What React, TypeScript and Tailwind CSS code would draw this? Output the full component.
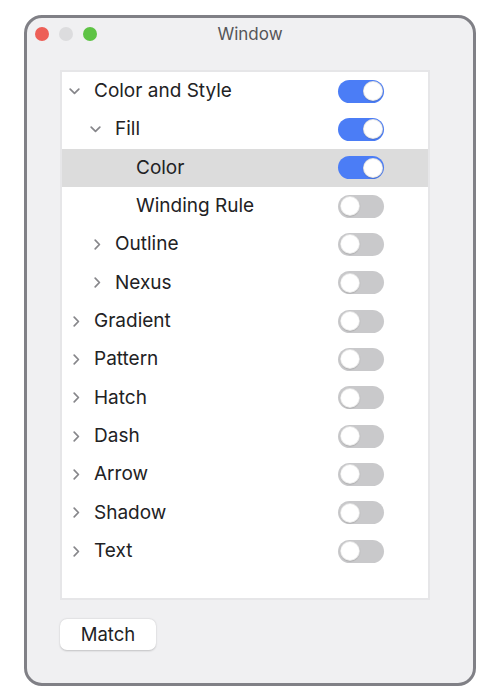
import { useState } from "react";

type Row = { label: string; level: number; chevron: "down" | "right" | null; on: boolean; selected?: boolean };

const ROWS: Row[] = [
  { label: "Color and Style", level: 0, chevron: "down", on: true },
  { label: "Fill", level: 1, chevron: "down", on: true },
  { label: "Color", level: 2, chevron: null, on: true, selected: true },
  { label: "Winding Rule", level: 2, chevron: null, on: false },
  { label: "Outline", level: 1, chevron: "right", on: false },
  { label: "Nexus", level: 1, chevron: "right", on: false },
  { label: "Gradient", level: 0, chevron: "right", on: false },
  { label: "Pattern", level: 0, chevron: "right", on: false },
  { label: "Hatch", level: 0, chevron: "right", on: false },
  { label: "Dash", level: 0, chevron: "right", on: false },
  { label: "Arrow", level: 0, chevron: "right", on: false },
  { label: "Shadow", level: 0, chevron: "right", on: false },
  { label: "Text", level: 0, chevron: "right", on: false },
];

const INDENT = ["pl-[7px]", "pl-[28px]", "pl-[49px]"];

function Chevron({ dir }: { dir: "down" | "right" }) {
  return dir === "down" ? (
    <svg width="11" height="7" viewBox="0 0 11 7" className="text-[#86868a]">
      <path d="M1.2 1.2 L5.5 5.4 L9.8 1.2" fill="none" stroke="currentColor" strokeWidth="1.7" strokeLinecap="round" strokeLinejoin="round" />
    </svg>
  ) : (
    <svg width="7" height="11" viewBox="0 0 7 11" className="ml-[4px] text-[#86868a]">
      <path d="M1.2 1.2 L5.4 5.5 L1.2 9.8" fill="none" stroke="currentColor" strokeWidth="1.7" strokeLinecap="round" strokeLinejoin="round" />
    </svg>
  );
}

function Toggle({ on }: { on: boolean }) {
  return (
    <div
      className={`flex h-[23px] w-[46px] items-center rounded-full px-[1.5px] ${
        on ? "justify-end bg-[#4b7df6]" : "justify-start bg-[#c9c9cb]"
      }`}
    >
      <div className="h-[20px] w-[20px] rounded-full border border-black/10 bg-white shadow-[0_0.5px_1px_rgba(0,0,0,0.2)]" />
    </div>
  );
}

export default function App() {
  const [rows] = useState(ROWS);
  return (
    <div className="h-[700px] w-[500px] bg-white pl-[24px] pt-[15px] font-['Inter','Liberation_Sans',sans-serif]">
      <div className="flex h-[671px] w-[452px] flex-col rounded-[18px] border-[3px] border-[#808086] bg-[#f0f0f2]">
        {/* Title bar */}
        <div className="relative flex h-[34px] items-center justify-center">
          <div className="absolute left-[8px] top-[9px] flex gap-[10px]">
            <span className="h-[14px] w-[14px] rounded-full bg-[#ed5f57]" />
            <span className="h-[14px] w-[14px] rounded-full bg-[#dcdcde]" />
            <span className="h-[14px] w-[14px] rounded-full bg-[#5ec345]" />
          </div>
          <span className="text-[17px] text-[#555558]">Window</span>
        </div>

        {/* Outline list */}
        <div className="ml-[33px] mt-[18px] h-[530px] w-[370px] border-2 border-[#e6e6e8] bg-white">
          {rows.map((r) => (
            <div
              key={r.label}
              className={`flex h-[38.33px] items-center pr-[44px] ${INDENT[r.level]} ${
                r.selected ? "bg-[#dcdcdc]" : ""
              }`}
            >
              <div className="flex w-[25px] items-center">{r.chevron && <Chevron dir={r.chevron} />}</div>
              <span className="flex-1 text-[19px] text-[#222224]">{r.label}</span>
              <Toggle on={r.on} />
            </div>
          ))}
        </div>

        {/* Footer */}
        <div className="ml-[33px] mt-[19px]">
          <button className="h-[31px] w-[96px] rounded-[7px] bg-white text-[18.5px] text-[#222224] shadow-[0_0.5px_2px_rgba(0,0,0,0.2)]">
            Match
          </button>
        </div>
      </div>
    </div>
  );
}
